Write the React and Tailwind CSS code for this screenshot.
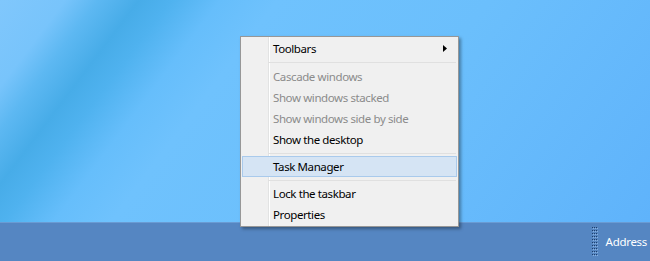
import React from 'react';

const MenuItem = ({ label, disabled, arrow, active }) => (
  <div
    className={
      active
        ? 'mx-[1px] h-[21px] flex items-center pl-[30px] border border-[#a9caec] bg-[#d5e4f4] text-[#000]'
        : 'h-[21px] flex items-center pl-[32px] pr-[10px] ' + (disabled ? 'text-[#8b8b8b]' : 'text-[#000]')
    }
  >
    <span className="flex-1">{label}</span>
    {arrow && (
      <svg width="4" height="7" viewBox="0 0 4 7" className="mr-[1px]">
        <path d="M0 0 L4 3.5 L0 7 Z" fill="#000" />
      </svg>
    )}
  </div>
);

const Separator = ({ h }) => (
  <div className={'flex items-center ' + h}>
    <div className="ml-[27px] mr-[2px] flex-1 h-px bg-[#e0e0e0]" />
  </div>
);

const Grip = () => {
  const dots = [];
  for (let r = 0; r < 10; r++) {
    for (let c = 0; c < 3; c++) {
      dots.push(<rect key={`d${r}${c}`} x={c * 2} y={r * 3} width="1" height="1" fill="#1f3f6b" />);
      dots.push(<rect key={`l${r}${c}`} x={c * 2 + 1} y={r * 3 + 1} width="1" height="1" fill="#8ab2e0" />);
    }
  }
  return (
    <svg width="7" height="30" viewBox="0 0 7 30">
      {dots}
    </svg>
  );
};

export default function App() {
  return (
    <div
      className="relative w-[650px] h-[261px] overflow-hidden flex flex-col"
      style={{ fontFamily: '"Noto Sans", "Open Sans", sans-serif' }}
    >
      <div className="flex-1 bg-[linear-gradient(127deg,#80c7fc_0%,#78c4fb_8%,#5db8f2_12%,#47ace8_17%,#4fb2ef_21%,#66befb_27%,#6fc2fd_34%,#6bbffc_60%,#5fb3fb_100%)]" />
      <div className="h-[39px] border-t border-[#6a9bd3] bg-[#5586c2] flex items-center justify-end">
        <div className="flex items-center gap-[7px] mr-[3px]">
          <Grip />
          <span className="text-[11.5px] tracking-[-0.3px] text-white">Address</span>
        </div>
      </div>

      <div className="absolute left-[240px] top-[36px] w-[219px] border border-[#979797] bg-[#f0f0f0] py-px text-[11.5px] tracking-[-0.4px] shadow-[2px_2px_3px_rgba(0,0,0,0.35)] bg-[linear-gradient(to_right,#f0f0f0_27px,#e2e3e3_27px,#e2e3e3_28px,#ffffff_28px,#ffffff_29px,#f0f0f0_29px)]">
        <MenuItem label="Toolbars" arrow />
        <Separator h="h-[7px]" />
        <MenuItem label="Cascade windows" disabled />
        <MenuItem label="Show windows stacked" disabled />
        <MenuItem label="Show windows side by side" disabled />
        <MenuItem label="Show the desktop" />
        <Separator h="h-[6px]" />
        <MenuItem label="Task Manager" active />
        <Separator h="h-[6px]" />
        <MenuItem label="Lock the taskbar" />
        <MenuItem label="Properties" />
      </div>
    </div>
  );
}
